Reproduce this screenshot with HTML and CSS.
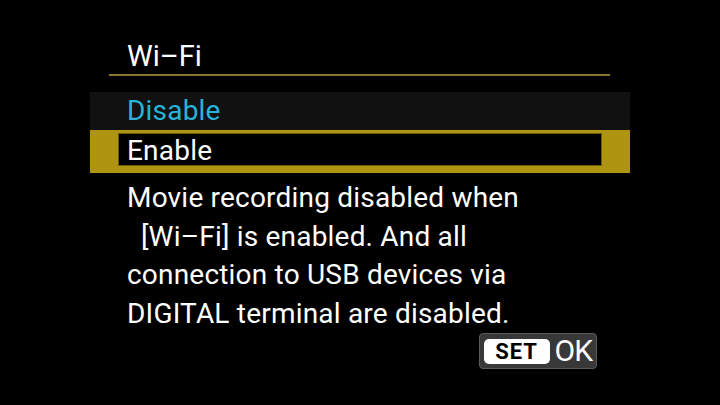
FILE: index.html
```html
<!DOCTYPE html>
<html lang="en">
<head>
  <meta charset="UTF-8">
  <title>Wi-Fi</title>
  <link rel="stylesheet" href="styles.css">
</head>
<body>

  <div class="menu">
    <h1 class="titulo">Wi–Fi</h1>

    <div class="opciones">
      <div class="opcion activa">Disable</div>
      <div class="opcion seleccionada">
        <div class="cursor">Enable</div>
      </div>
    </div>

    <p class="aviso">
      Movie recording disabled when<br>
      <span class="sangria">[Wi–Fi] is enabled. And all</span><br>
      connection to USB devices via<br>
      DIGITAL terminal are disabled.
    </p>

    <div class="pie">
      <div class="boton-ok">
        <span class="tecla">SET</span>
        <span class="ok">OK</span>
      </div>
    </div>
  </div>

</body>
</html>
```

FILE: styles.css
```css
html, body {
  margin: 0;
  background: #000;
}

body {
  width: 720px;
  height: 405px;
  overflow: hidden;
  font-family: Roboto, 'Noto Sans', sans-serif;
  color: #fff;
}

.menu {
  width: 540px;
  margin-left: 90px;
  padding-top: 38px;
}

.titulo {
  margin: 0 20px 0 19px;
  padding-left: 18px;
  font-size: 29px;
  font-weight: normal;
  line-height: 36px;
  border-bottom: 2px solid #857632;
}

.opciones {
  margin-top: 16px;
}

.opcion {
  height: 38px;
  font-size: 28px;
  line-height: 38px;
  padding-left: 37px;
  letter-spacing: 0.2px;
  background: #111;
}

.opcion.activa {
  color: #27b3dc;
}

.opcion.seleccionada {
  padding: 3px 28px 2px 28px;
  background: #ae9410;
}

.cursor {
  height: 31px;
  line-height: 33px;
  padding-left: 8px;
  background: #000;
  border: 1px solid #6e5e0a;
}

.aviso {
  margin: 6px 0 0 37px;
  font-size: 28px;
  line-height: 38.5px;
  letter-spacing: 0.2px;
}

.sangria {
  margin-left: 14px;
}

.pie {
  display: flex;
  justify-content: flex-end;
  margin: 0 33px 0 0;
}

.boton-ok {
  display: flex;
  align-items: center;
  gap: 5px;
  height: 34px;
  padding: 0 4px 0 4px;
  background: #383838;
  border: 1px solid #5a5a5a;
  border-radius: 4px;
}

.tecla {
  width: 66px;
  height: 25px;
  line-height: 26px;
  text-align: center;
  background: #fff;
  color: #000;
  border-radius: 5px;
  font-size: 22px;
  font-weight: bold;
  letter-spacing: 1px;
}

.ok {
  font-size: 30px;
  line-height: 34px;
  letter-spacing: -1px;
}
```
